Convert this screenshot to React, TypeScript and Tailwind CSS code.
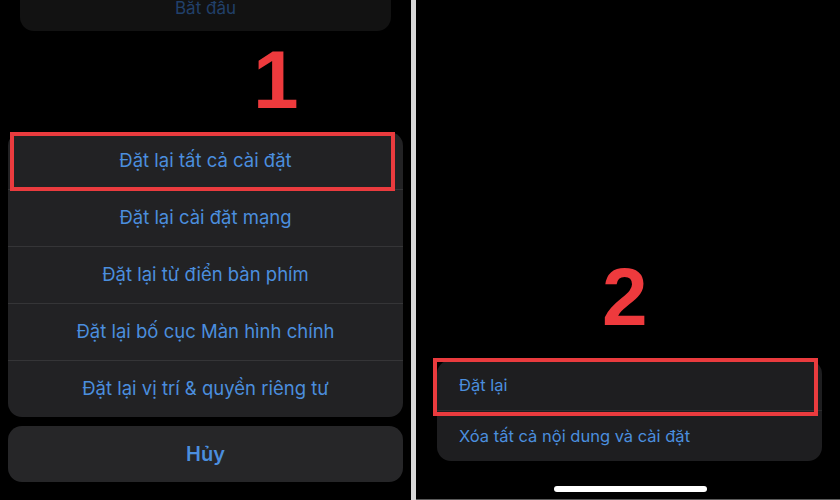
const font = { fontFamily: 'Inter, "Noto Sans", "Liberation Sans", sans-serif' }

const sheetRows = [
  'Đặt lại tất cả cài đặt',
  'Đặt lại cài đặt mạng',
  'Đặt lại từ điển bàn phím',
  'Đặt lại bố cục Màn hình chính',
  'Đặt lại vị trí & quyền riêng tư',
]

function StepNumber({ n, className }: { n: string; className: string }) {
  return (
    <div
      className={`text-[82px] font-bold leading-[82px] text-[#ee3a3d] ${className}`}
      style={{ fontFamily: '"Liberation Sans", Arial, sans-serif' }}
    >
      {n}
    </div>
  )
}

function LeftPanel() {
  return (
    <div className="flex w-[411px] flex-col bg-black">
      <div className="mx-[20px] flex h-[31px] w-[371px] justify-center rounded-b-[14px] bg-[#121212]">
        <span className="-mt-[2px] text-[17px] leading-[20px] text-[#21406a]">Bắt đầu</span>
      </div>

      <StepNumber n="1" className="ml-[253px] mt-[8px]" />

      <div className="relative mx-[8px] mt-[11px] w-[395px] rounded-[14px] bg-[#222224]">
        {sheetRows.map((label, i) => (
          <div
            key={label}
            className={`flex h-[57px] items-center justify-center text-[18.5px] text-[#4b8ede] ${i > 0 ? 'border-t border-[#353537]' : ''}`}
          >
            {label}
          </div>
        ))}
        <div className="absolute left-[2px] top-0 h-[59px] w-[385px] border-[4px] border-[#ea3b3e]" />
      </div>

      <div className="mx-[8px] mt-[9px] flex h-[56px] w-[395px] items-center justify-center rounded-[14px] bg-[#262628] text-[20px] font-semibold text-[#4b8ede]">
        Hủy
      </div>
    </div>
  )
}

function RightPanel() {
  return (
    <div className="flex flex-1 flex-col border-b border-[#5a5a5a] bg-black">
      <StepNumber n="2" className="ml-[186px] mt-[256px]" />

      <div className="relative ml-[21px] mt-[22px] w-[385px] rounded-[14px] bg-[#1e1e20] text-[16.5px] text-[#4b8ede]">
        <div className="flex h-[50px] items-center pl-[22px]">Đặt lại</div>
        <div className="flex h-[51px] items-center border-t border-[#2e2e30] pl-[22px]">Xóa tất cả nội dung và cài đặt</div>
        <div className="absolute -left-[4px] -top-[2px] h-[58px] w-[385px] border-[4px] border-[#ea3b3e]" />
      </div>

      <div className="ml-[138px] mt-[25px] h-[6px] w-[153px] rounded-full bg-white" />
    </div>
  )
}

export default function App() {
  return (
    <div className="flex h-[500px] w-[840px] overflow-hidden bg-black" style={font}>
      <LeftPanel />
      <div className="w-[5px] bg-[#d8d8d8]" />
      <RightPanel />
    </div>
  )
}
